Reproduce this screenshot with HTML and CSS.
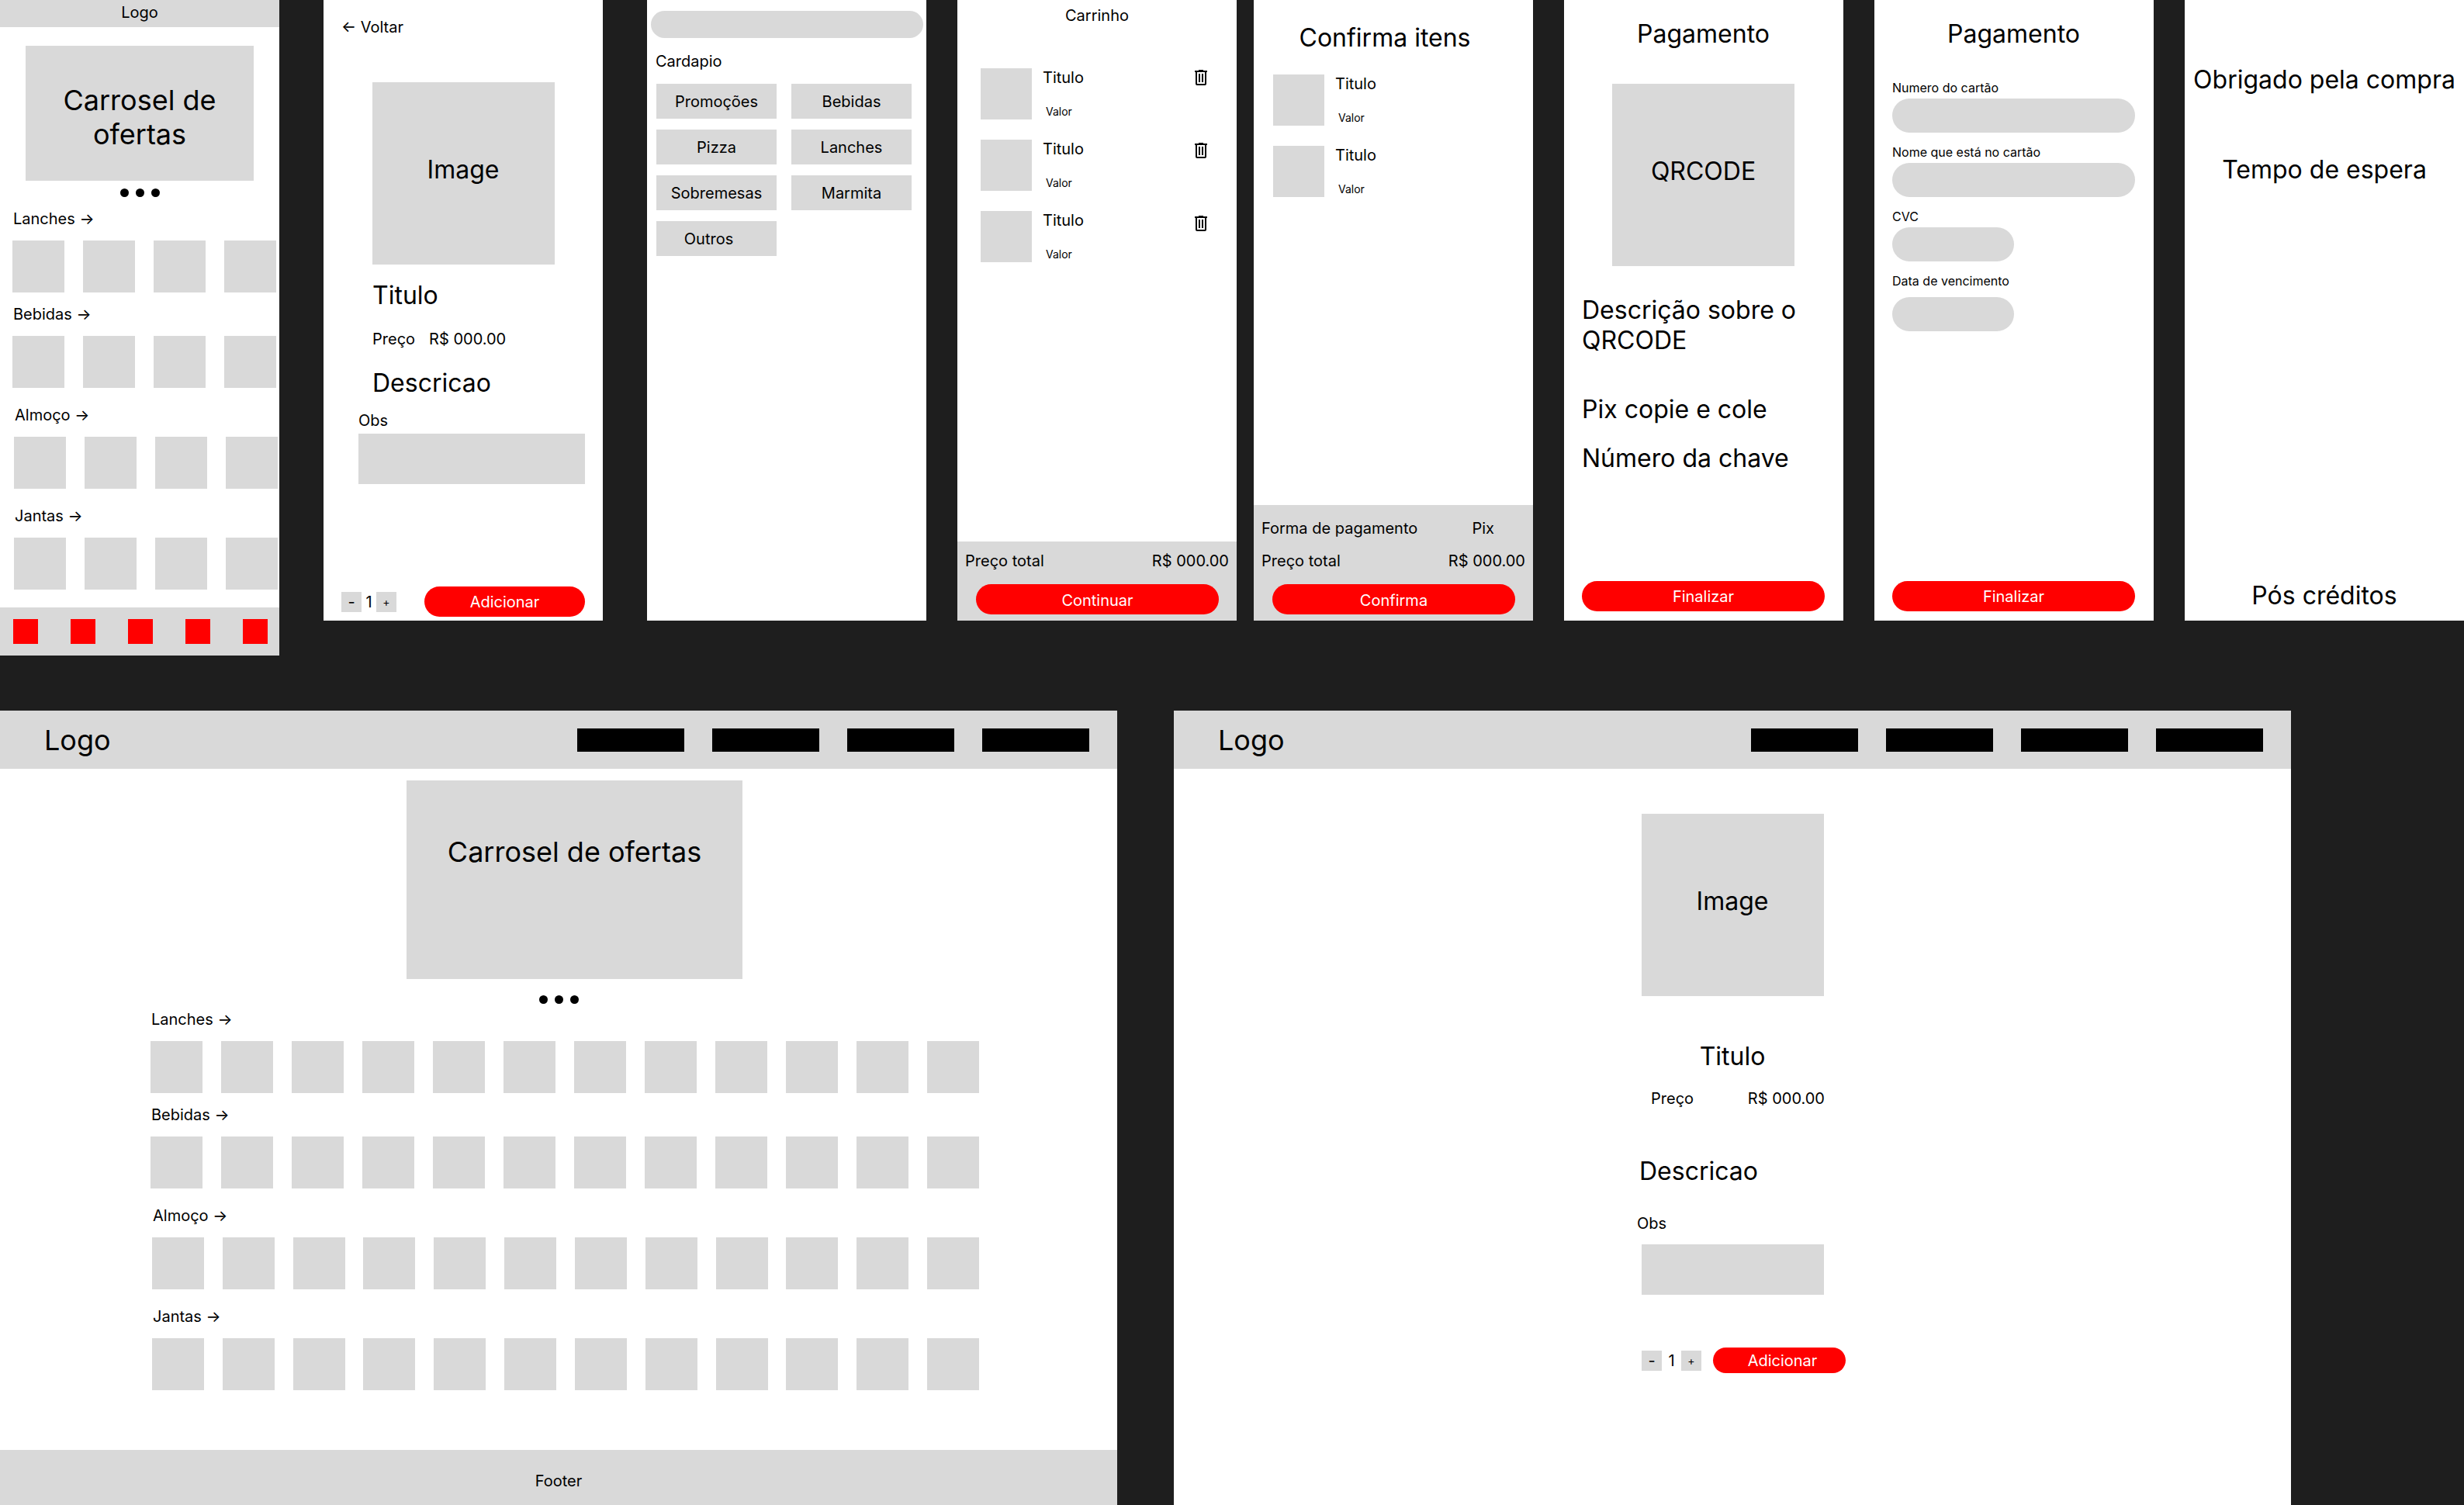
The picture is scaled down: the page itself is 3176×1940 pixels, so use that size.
FILE: index.html
```html
<!DOCTYPE html>
<html lang="pt-BR">
<head>
<meta charset="utf-8">
<meta name="viewport" content="width=device-width, initial-scale=1">
<title>Cardapio - telas</title>
<link rel="stylesheet" href="styles.css">
</head>
<body>
<svg class="sprite" aria-hidden="true">
  <symbol id="trash" viewBox="0 0 16 20">
    <path d="M5 0h6v1h5v2h-1v15q0 2-2 2H3q-2 0-2-2V3H0V1h5zM3 3v15h10V3zM5 5h2v11H5zM9 5h2v11H9z" fill-rule="evenodd"/>
  </symbol>
</svg>

<main class="canvas">
  <div class="phones">

    <!-- Home -->
    <section class="board home">
      <header class="home-header">Logo</header>
      <div class="carousel"><p class="display">Carrosel de ofertas</p></div>
      <div class="dots"><i></i><i></i><i></i></div>
      <div class="aisles">
        <section class="aisle">
          <h2><a href="#lanches">Lanches →</a></h2>
          <ul class="strip"><li></li><li></li><li></li><li></li></ul>
        </section>
        <section class="aisle">
          <h2><a href="#bebidas">Bebidas →</a></h2>
          <ul class="strip"><li></li><li></li><li></li><li></li></ul>
        </section>
        <section class="aisle aisle-inset">
          <h2><a href="#almoco">Almoço →</a></h2>
          <ul class="strip"><li></li><li></li><li></li><li></li></ul>
        </section>
        <section class="aisle aisle-inset">
          <h2><a href="#jantas">Jantas →</a></h2>
          <ul class="strip"><li></li><li></li><li></li><li></li></ul>
        </section>
      </div>
      <nav class="tabbar" aria-label="Principal">
        <a href="#home" aria-label="Home"></a>
        <a href="#cardapio" aria-label="Cardapio"></a>
        <a href="#carrinho" aria-label="Carrinho"></a>
        <a href="#pagamento" aria-label="Pagamento"></a>
        <a href="#conta" aria-label="Conta"></a>
      </nav>
    </section>

    <!-- Produto -->
    <section class="board product">
      <a class="back" href="#home">← Voltar</a>
      <div class="picture title">Image</div>
      <div class="details">
        <h2 class="title">Titulo</h2>
        <p class="price"><span>Preço</span><span>R$ 000.00</span></p>
        <p class="title">Descricao</p>
      </div>
      <div class="note">
        <label for="obs">Obs</label>
        <input id="obs" type="text">
      </div>
      <div class="purchase">
        <div class="stepper">
          <button class="minus" type="button" aria-label="Menos">-</button>
          <output>1</output>
          <button type="button" aria-label="Mais">+</button>
        </div>
        <button class="action" type="button">Adicionar</button>
      </div>
    </section>

    <!-- Cardapio -->
    <section class="board menu">
      <input class="search" type="search" aria-label="Buscar">
      <h2>Cardapio</h2>
      <div class="categories">
        <button type="button">Promoções</button>
        <button type="button">Bebidas</button>
        <button type="button">Pizza</button>
        <button type="button">Lanches</button>
        <button type="button">Sobremesas</button>
        <button type="button">Marmita</button>
        <button class="category-other" type="button">Outros</button>
      </div>
    </section>

    <!-- Carrinho -->
    <section class="board cart">
      <h2>Carrinho</h2>
      <div class="cart-body">
        <ul class="items">
          <li class="item"><div class="thumb"></div><div class="item-text"><h3>Titulo</h3><p>Valor</p></div></li>
          <li class="item"><div class="thumb"></div><div class="item-text"><h3>Titulo</h3><p>Valor</p></div></li>
          <li class="item"><div class="thumb"></div><div class="item-text"><h3>Titulo</h3><p>Valor</p></div></li>
        </ul>
        <div class="removers">
          <button type="button" aria-label="Remover item 1"><svg><use href="#trash"/></svg></button>
          <button type="button" aria-label="Remover item 2"><svg><use href="#trash"/></svg></button>
          <button type="button" aria-label="Remover item 3"><svg><use href="#trash"/></svg></button>
        </div>
      </div>
      <footer class="summary">
        <p class="summary-row"><span>Preço total</span><span>R$ 000.00</span></p>
        <button class="action" type="button">Continuar</button>
      </footer>
    </section>

    <!-- Confirma itens -->
    <section class="board confirm">
      <h2 class="title">Confirma itens</h2>
      <ul class="items">
        <li class="item"><div class="thumb"></div><div class="item-text"><h3>Titulo</h3><p>Valor</p></div></li>
        <li class="item"><div class="thumb"></div><div class="item-text"><h3>Titulo</h3><p>Valor</p></div></li>
      </ul>
      <footer class="summary">
        <p class="summary-row summary-method"><span>Forma de pagamento</span><span>Pix</span></p>
        <p class="summary-row"><span>Preço total</span><span>R$ 000.00</span></p>
        <button class="action" type="button">Confirma</button>
      </footer>
    </section>

    <!-- Pagamento com Pix -->
    <section class="board payment">
      <h2 class="title">Pagamento</h2>
      <div class="picture title">QRCODE</div>
      <div class="pix title">
        <p>Descrição sobre o QRCODE</p>
        <p>Pix copie e cole</p>
        <p>Número da chave</p>
      </div>
      <button class="action" type="button">Finalizar</button>
    </section>

    <!-- Pagamento com cartão -->
    <section class="board payment">
      <h2 class="title">Pagamento</h2>
      <form class="card-form">
        <label for="numero">Numero do cartão</label>
        <input id="numero" type="text">
        <label for="nome">Nome que está no cartão</label>
        <input id="nome" type="text">
        <label for="cvc">CVC</label>
        <input id="cvc" class="short" type="text">
        <label for="data">Data de vencimento</label>
        <input id="data" class="short late" type="text">
      </form>
      <button class="action" type="button">Finalizar</button>
    </section>

    <!-- Obrigado -->
    <section class="board thanks title">
      <h2 class="title">Obrigado pela compra</h2>
      <p>Tempo de espera</p>
      <p class="credits">Pós créditos</p>
    </section>
  </div>

  <div class="desktops">

    <!-- Home desktop -->
    <section class="board desktop">
      <header class="site-header">
        <span class="display">Logo</span>
        <nav aria-label="Site">
          <a href="#home" aria-label="Home"></a><a href="#cardapio" aria-label="Cardapio"></a><a href="#carrinho" aria-label="Carrinho"></a><a href="#conta" aria-label="Conta"></a>
        </nav>
      </header>
      <div class="showcase"><div class="carousel"><p class="display">Carrosel de ofertas</p></div></div>
      <div class="dots"><i></i><i></i><i></i></div>
      <div class="aisles">
        <section class="aisle">
          <h2><a href="#lanches">Lanches →</a></h2>
          <ul class="strip"><li></li><li></li><li></li><li></li><li></li><li></li><li></li><li></li><li></li><li></li><li></li><li></li></ul>
        </section>
        <section class="aisle">
          <h2><a href="#bebidas">Bebidas →</a></h2>
          <ul class="strip"><li></li><li></li><li></li><li></li><li></li><li></li><li></li><li></li><li></li><li></li><li></li><li></li></ul>
        </section>
        <section class="aisle aisle-inset">
          <h2><a href="#almoco">Almoço →</a></h2>
          <ul class="strip"><li></li><li></li><li></li><li></li><li></li><li></li><li></li><li></li><li></li><li></li><li></li><li></li></ul>
        </section>
        <section class="aisle aisle-inset">
          <h2><a href="#jantas">Jantas →</a></h2>
          <ul class="strip"><li></li><li></li><li></li><li></li><li></li><li></li><li></li><li></li><li></li><li></li><li></li><li></li></ul>
        </section>
      </div>
      <footer class="site-footer">Footer</footer>
    </section>

    <!-- Produto desktop -->
    <section class="board desktop">
      <header class="site-header">
        <span class="display">Logo</span>
        <nav aria-label="Site">
          <a href="#home" aria-label="Home"></a><a href="#cardapio" aria-label="Cardapio"></a><a href="#carrinho" aria-label="Carrinho"></a><a href="#conta" aria-label="Conta"></a>
        </nav>
      </header>
      <div class="sheet">
        <div class="picture title">Image</div>
        <h2 class="title">Titulo</h2>
        <p class="price"><span>Preço</span><span>R$ 000.00</span></p>
        <p class="title description">Descricao</p>
        <div class="note">
          <label for="obs-desktop">Obs</label>
          <input id="obs-desktop" type="text">
        </div>
        <div class="purchase">
          <div class="stepper">
            <button class="minus" type="button" aria-label="Menos">-</button>
            <output>1</output>
            <button type="button" aria-label="Mais">+</button>
          </div>
          <button class="action" type="button">Adicionar</button>
        </div>
      </div>
    </section>
  </div>
</main>
</body>
</html>
```
FILE: styles.css
```css
:root {
  --canvas: #1e1e1e;
  --board: #fff;
  --block: #d9d9d9;
  --accent: #f00;
}

* { box-sizing: border-box; }

body {
  margin: 0;
  background: var(--canvas);
  color: #000;
  font: 400 20px/24px Inter, "Liberation Sans", sans-serif;
}

h2, h3, p, ul { margin: 0; padding: 0; font: inherit; }
ul { list-style: none; }
a { color: inherit; text-decoration: none; }
button, input { margin: 0; padding: 0; border: 0; border-radius: 0; background: var(--block); color: inherit; font: inherit; }
input { padding: 0 16px; }

.sprite { display: none; }
.display { font-size: 36px; line-height: 44px; }
.title { font-size: 32px; line-height: 39px; }

/* Canvas */
.canvas { display: flex; flex-direction: column; gap: 71px; min-height: 100vh; }
.phones {
  display: grid;
  grid-template-columns: 1fr 57px 1fr 57px 1fr 40px 1fr 22px 1fr 40px 1fr 40px 1fr 40px 1fr;
  align-items: start;
}
.phones > :nth-child(1) { grid-column: 1; }
.phones > :nth-child(2) { grid-column: 3; }
.phones > :nth-child(3) { grid-column: 5; }
.phones > :nth-child(4) { grid-column: 7; }
.phones > :nth-child(5) { grid-column: 9; }
.phones > :nth-child(6) { grid-column: 11; }
.phones > :nth-child(7) { grid-column: 13; }
.phones > :nth-child(8) { grid-column: 15; }
.phones > * { grid-row: 1; }
.desktops {
  flex: 1;
  display: grid;
  grid-template-columns: 1fr 1fr;
  gap: 73px;
  padding-right: 223px;
}
.board { display: flex; flex-direction: column; min-width: 0; min-height: 800px; background: var(--board); }

/* Shared pieces */
.action { height: 39px; border-radius: 20px; background: var(--accent); color: #fff; }
.picture {
  display: flex;
  align-items: center;
  justify-content: center;
  align-self: center;
  width: 235px;
  height: 235px;
  padding-bottom: 10px;
  background: var(--block);
}
.carousel { background: var(--block); text-align: center; }
.dots { display: flex; justify-content: center; gap: 9px; }
.dots i { width: 11px; height: 11px; border-radius: 50%; background: #000; }
.aisle + .aisle { margin-top: 16px; }
.aisle + .aisle-inset { margin-top: 23px; padding-left: 2px; }
.aisle h2 { padding-left: 1px; }
.strip { display: flex; justify-content: space-between; margin-top: 16px; }
.strip li { flex: none; width: 67px; height: 67px; background: var(--block); }
.note { display: flex; flex-direction: column; }
.note input { height: 65px; }
.purchase, .stepper { display: flex; align-items: center; }
.stepper button { width: 26px; height: 26px; font-size: 14px; line-height: 17px; }
.stepper .minus { font-size: 20px; line-height: 24px; }
.stepper output { text-align: center; }

/* Home */
.home-header { padding: 4px 0 7px; background: var(--block); text-align: center; }
.home .carousel { margin: 24px 33px 0; padding: 48px 40px 38px; }
.home .dots { margin-top: 10px; }
.home .aisles { padding: 16px 0 23px 16px; }
.home .strip { justify-content: flex-start; gap: 24px; }
.tabbar { display: flex; justify-content: space-between; margin-top: auto; padding: 15px 15px 15px 17px; background: var(--block); }
.tabbar a { width: 32px; height: 32px; background: var(--accent); }

/* Produto */
.product { padding: 23px 23px 5px; }
.product .picture { margin-top: 59px; }
.product .details { margin: 20px 0 0 40px; }
.product .price { display: flex; gap: 18px; margin: 25px 0; }
.product .note { gap: 5px; margin: 17px 0 0 22px; }
.product .purchase { justify-content: space-between; margin-top: auto; }
.product .stepper output { width: 19px; }
.product .action { width: 207px; }

/* Cardapio */
.search { height: 35px; margin: 14px 4px 0 5px; border-radius: 18px; }
.menu h2 { margin: 18px 11px 17px; }
.categories { display: grid; grid-template-columns: 1fr 1fr; gap: 14px 19px; margin: 0 19px 0 12px; }
.categories button { height: 45px; }
.categories .category-other { padding-right: 20px; }

/* Carrinho e confirmação */
.cart > h2 { margin-top: 8px; text-align: center; }
.cart-body { display: flex; justify-content: space-between; margin: 56px 38px 0 30px; }
.items { display: flex; flex-direction: column; gap: 26px; }
.item { display: flex; gap: 14px; }
.thumb { width: 66px; height: 66px; background: var(--block); }
.item-text { display: flex; flex-direction: column; justify-content: space-between; padding-bottom: 2px; }
.item-text p { padding-left: 4px; font-size: 14px; line-height: 17px; }
.removers { display: flex; flex-direction: column; gap: 74px; padding-top: 2px; }
.removers button { display: block; width: 16px; height: 20px; background: none; }
.removers svg { display: block; width: 16px; height: 20px; }
.confirm > .title { margin: 29px 22px 28px 0; text-align: center; }
.confirm .items { margin-left: 25px; }
.summary { display: flex; flex-direction: column; margin-top: auto; padding: 13px 10px 8px; background: var(--block); }
.summary-row { display: flex; justify-content: space-between; }
.summary-method { padding-right: 40px; margin-bottom: 18px; }
.confirm .summary { padding-top: 18px; }
.summary .action { margin: 18px 13px 0 14px; padding-top: 2px; }

/* Pagamento */
.payment { padding: 24px 24px 12px 23px; }
.payment > h2 { text-align: center; }
.payment .picture { margin-top: 45px; }
.payment > .action { margin-top: auto; }
.pix { margin-top: 37px; }
.pix p + p { margin-top: 50px; }
.pix p + p + p { margin-top: 24px; }
.card-form { display: flex; flex-direction: column; align-items: flex-start; margin-top: 25px; }
.card-form label { margin-top: 16px; font-size: 16px; line-height: 19px; }
.card-form input { width: 100%; height: 44px; margin-top: 4px; border-radius: 22px; }
.card-form .short { width: 157px; }
.card-form .late { margin-top: 11px; }

/* Obrigado */
.thanks { padding: 83px 0 13px; text-align: center; }
.thanks p { margin-top: 77px; }
.thanks .credits { margin-top: auto; }

/* Desktop */
.site-header { display: flex; align-items: center; justify-content: space-between; height: 75px; padding: 0 36px 0 57px; background: var(--block); }
.site-header nav { display: flex; gap: 36px; }
.site-header a { width: 138px; height: 30px; background: #000; }
.showcase { display: flex; justify-content: center; margin-top: 15px; padding-left: 41px; }
.desktop .carousel { width: 433px; height: 256px; padding-top: 70px; }
.desktop .dots { margin-top: 21px; }
.desktop .aisles { padding: 8px 178px 0 194px; }
.site-footer { margin-top: auto; padding: 28px 0 19px; background: var(--block); text-align: center; }

/* Produto desktop */
.sheet { display: flex; flex-direction: column; width: 246px; margin: 58px auto 0; }
.sheet h2 { margin-top: 58px; text-align: center; }
.sheet .price { display: flex; justify-content: space-between; margin-top: 23px; padding: 0 4px 0 18px; }
.sheet .description { margin-top: 62px; padding-left: 3px; }
.sheet .note { gap: 15px; margin-top: 36px; }
.sheet .note input { width: 235px; margin-left: 6px; }
.sheet .purchase { gap: 15px; margin: 68px 0 0 6px; }
.sheet .stepper output { width: 25px; }
.sheet .action { flex: none; width: 171px; height: 33px; padding-left: 8px; }
```
